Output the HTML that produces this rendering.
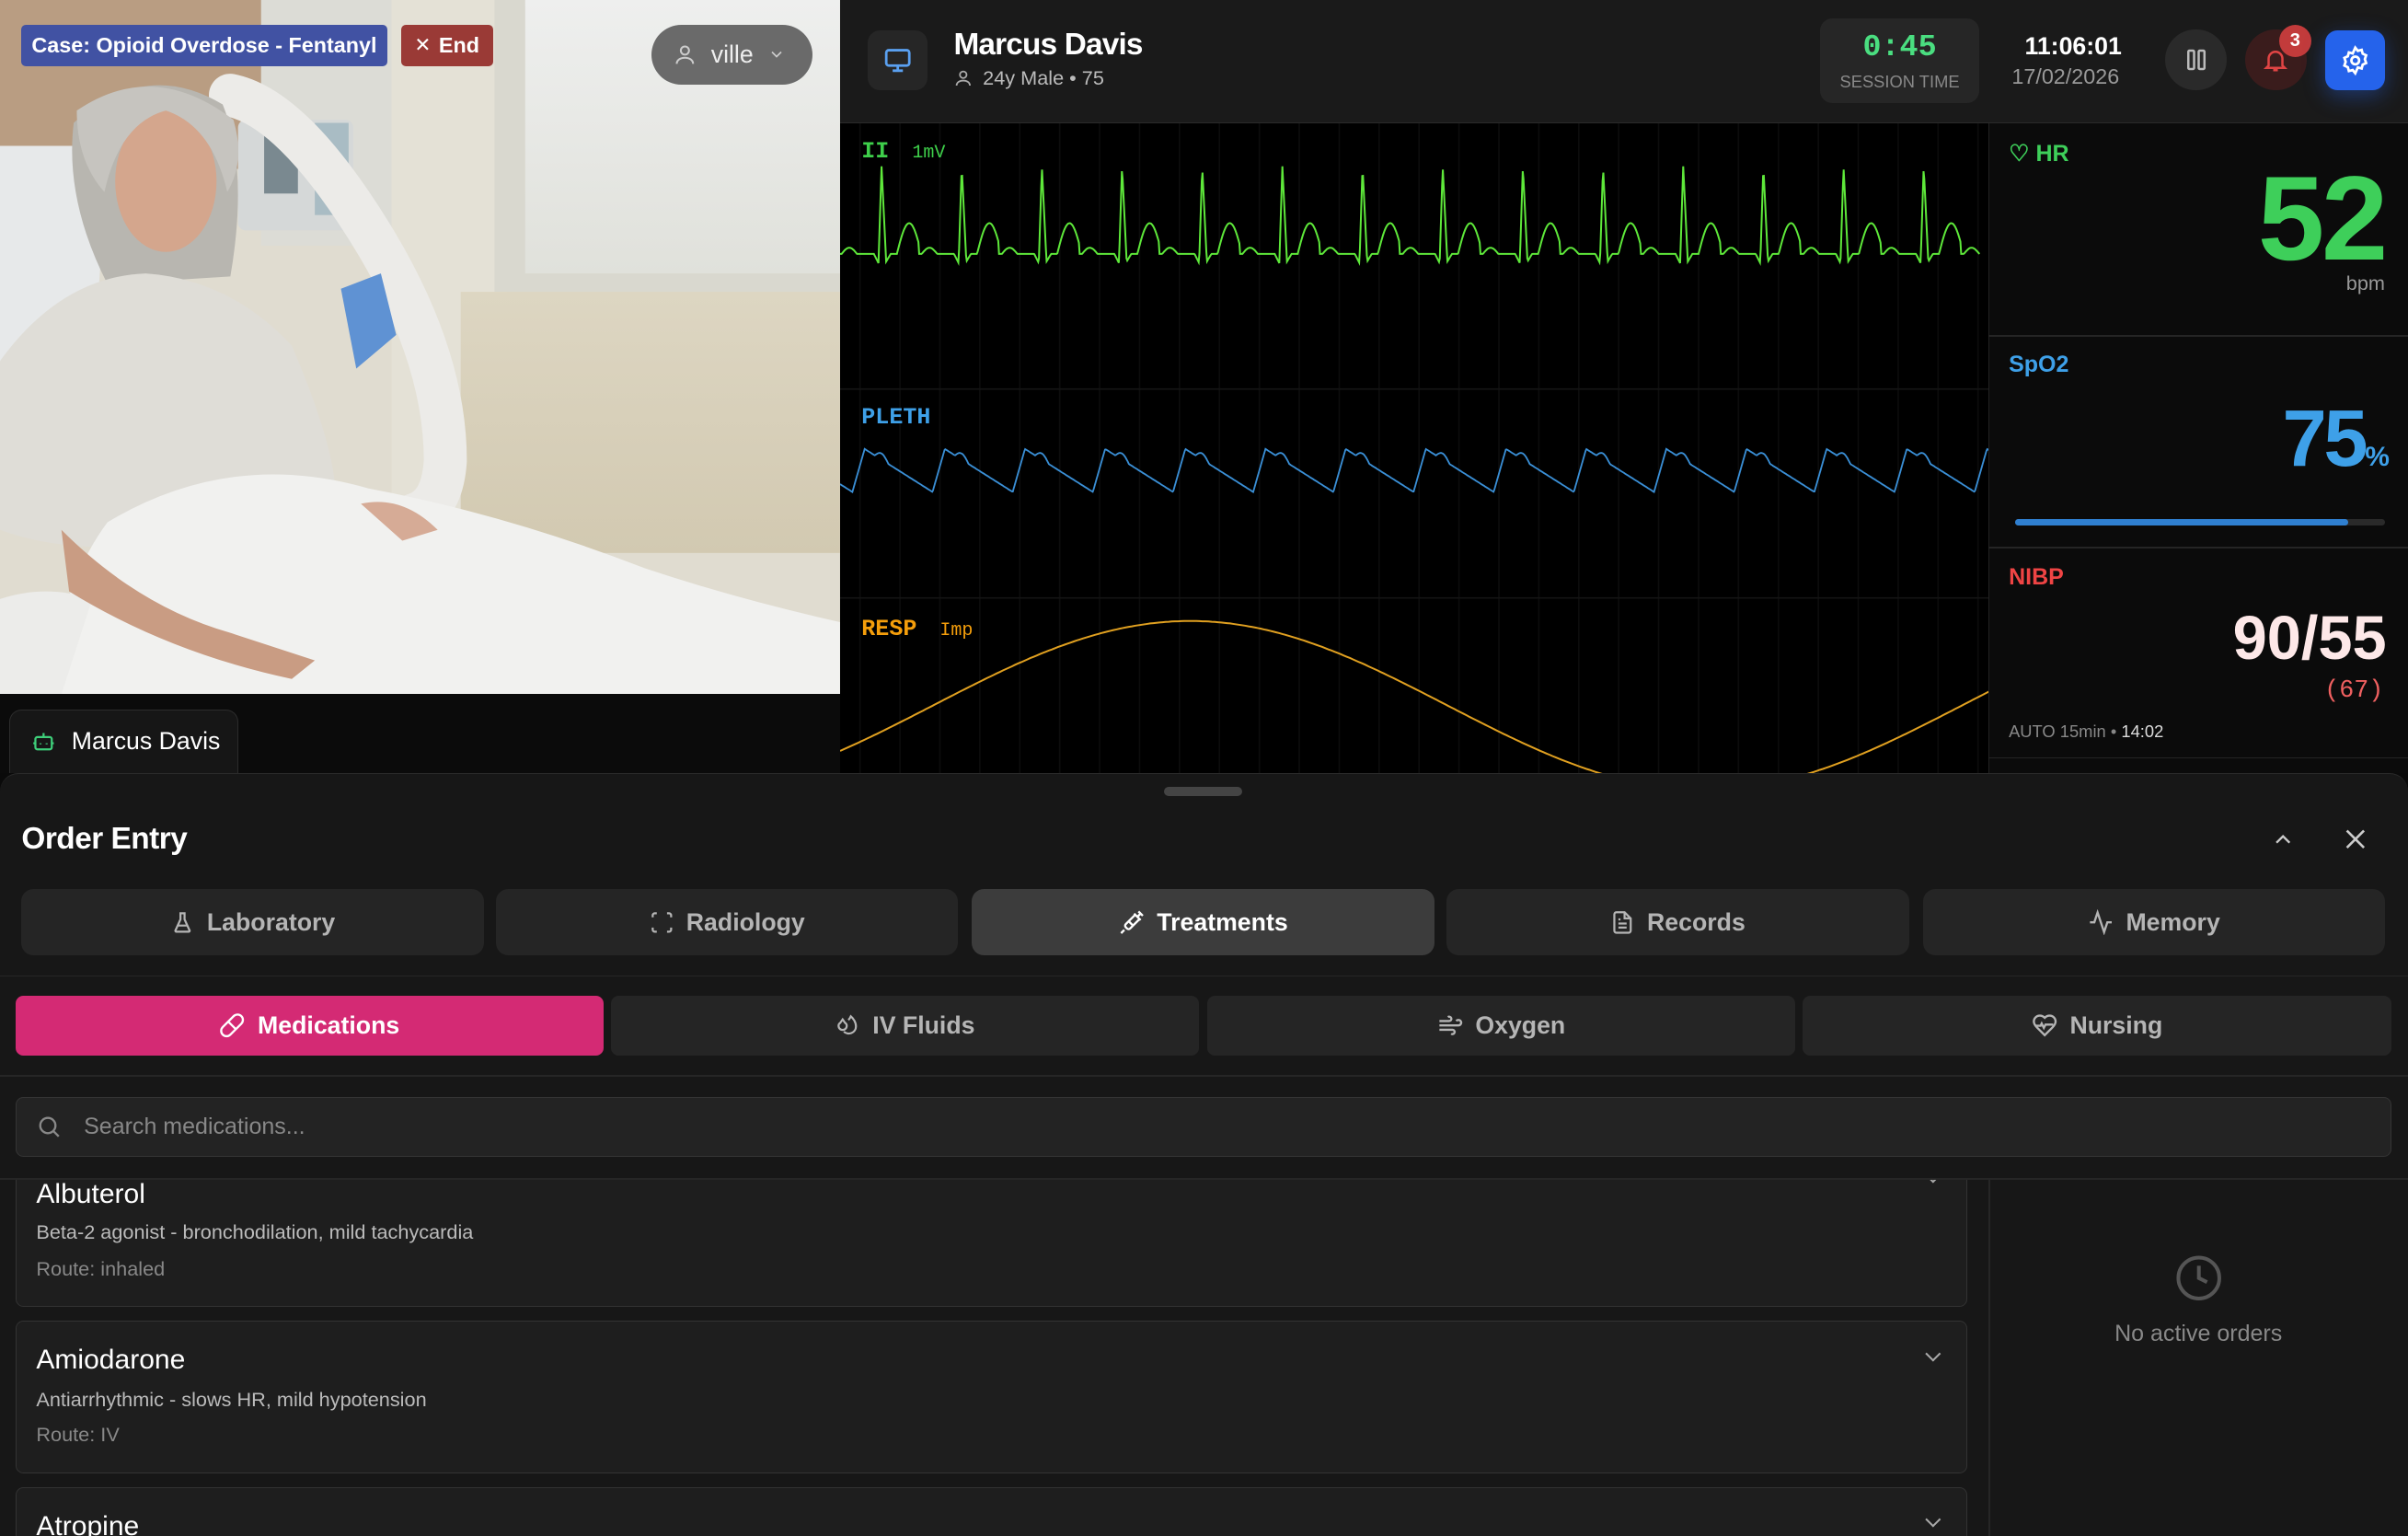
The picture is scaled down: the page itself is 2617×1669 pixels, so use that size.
<!DOCTYPE html>
<html><head><meta charset="utf-8"><style>
html{zoom:1.66901}
*{box-sizing:border-box;margin:0;padding:0}
body{width:1568px;height:999.4px;overflow:hidden;background:#0a0a0a;font-family:"Liberation Sans",sans-serif;color:#fff;position:relative}
.abs{position:absolute}
.mono{font-family:"Liberation Mono",monospace}
.btn{position:absolute;display:flex;align-items:center;justify-content:center;gap:8px;border-radius:8px;font-weight:bold;font-size:16px}
.tab{top:579px;height:43px;width:301px;background:#252525;color:#b5b5b5}
.sub{top:648px;height:39px;width:383px;background:#252525;color:#b5b5b5;border-radius:5px}
.card{position:absolute;left:10px;width:1271px;background:#1e1e1e;border:1px solid #333;border-radius:5px}
.card h3{position:absolute;left:13px;font-size:18px;font-weight:normal;color:#fff}
.card .d{position:absolute;left:13px;font-size:13px;color:#bbb}
.card .r{position:absolute;left:13px;font-size:13px;color:#888}
.chev{position:absolute;right:18px;width:7px;height:7px;border-right:1.5px solid #aaa;border-bottom:1.5px solid #aaa;transform:rotate(45deg)}
svg{display:block}
</style></head><body>

<!-- photo -->
<div class="abs" style="left:0;top:0;width:547px;height:452px;overflow:hidden;background:#cfc6b3">
<svg width="547" height="452" viewBox="0 0 547 452">
<defs>
<linearGradient id="win" x1="0" y1="0" x2="0" y2="1"><stop offset="0" stop-color="#eeefee"/><stop offset="1" stop-color="#e0e1db"/></linearGradient>
<linearGradient id="bw" x1="0" y1="0" x2="0" y2="1"><stop offset="0" stop-color="#ddd6c2"/><stop offset="1" stop-color="#d2c9b1"/></linearGradient>
</defs>
<rect width="547" height="452" fill="#e0dcd0"/>
<rect x="0" y="0" width="185" height="110" fill="#b99d82"/>
<rect x="170" y="0" width="90" height="160" fill="#dcdcd6"/>
<rect x="255" y="0" width="75" height="360" fill="#e4e1d6"/>
<rect x="322" y="0" width="225" height="190" fill="#d9d8cf"/>
<rect x="342" y="0" width="205" height="178" fill="url(#win)"/>
<rect x="300" y="190" width="247" height="170" fill="url(#bw)"/>
<rect x="155" y="78" width="75" height="72" rx="5" fill="#d5d8d8"/>
<rect x="172" y="88" width="22" height="38" fill="#7a8990"/>
<rect x="205" y="80" width="22" height="60" fill="#a9bcc4"/>
<path d="M150 62 Q190 70 240 150 Q290 230 290 300 Q288 330 270 335" fill="none" stroke="#ecebe8" stroke-width="28" stroke-linecap="round"/>
<path d="M222 188 L248 178 L258 218 L232 240 Z" fill="#5f92d3"/>
<path d="M0 95 L70 95 L60 260 L0 290 Z" fill="#e7e9ea"/>
<path d="M48 80 Q95 38 145 68 Q162 110 150 180 L70 185 Q42 130 48 80 Z" fill="#b8b6b0"/>
<ellipse cx="108" cy="118" rx="33" ry="46" fill="#d4a68d"/>
<path d="M50 72 Q100 38 152 78 Q160 105 148 125 Q138 82 108 72 Q78 80 68 125 Q50 105 50 72 Z" fill="#c6c4bf"/>
<path d="M0 235 Q40 180 95 178 Q150 182 190 225 Q222 300 218 330 L100 355 Q40 360 0 345 Z" fill="#dfddd7"/>
<path d="M70 340 Q150 292 240 318 Q330 335 420 370 Q480 390 547 405 L547 452 L30 452 Q40 380 70 340 Z" fill="#f1f1ef"/>
<path d="M0 452 L0 390 Q30 380 60 390 L40 452 Z" fill="#ececea"/>
<path d="M40 345 Q90 395 150 412 L205 430 L190 442 Q110 425 45 385 Z" fill="#c99c83"/>
<path d="M235 328 Q262 322 285 345 L262 352 Z" fill="#d6ab96"/>
</svg>
<div class="abs" style="left:14px;top:16px;width:238px;height:27px;background:#4152a3;border-radius:3px;font-size:14px;font-weight:bold;display:flex;align-items:center;justify-content:center">Case: Opioid Overdose - Fentanyl</div>
<div class="abs" style="left:261px;top:16px;width:60px;height:27px;background:#9a3a36;border-radius:3px;font-size:14px;font-weight:bold;display:flex;align-items:center;justify-content:center;gap:5px"><span style="font-weight:normal;font-size:13px">✕</span>End</div>
<div class="abs" style="left:424px;top:16px;width:105px;height:39px;background:#6a6a6a;border-radius:20px;font-size:16px;color:#eee;display:flex;align-items:center;padding-left:14px;gap:9px">
<svg width="16" height="16" viewBox="0 0 24 24" fill="none" stroke="#ccc" stroke-width="1.8"><circle cx="12" cy="8" r="4"/><path d="M4 21c0-4 4-6 8-6s8 2 8 6"/></svg>ville
<svg width="12" height="12" viewBox="0 0 24 24" fill="none" stroke="#ccc" stroke-width="2"><path d="M6 9l6 6 6-6"/></svg></div>
</div>
<div class="abs" style="left:0;top:452px;width:547px;height:51px;background:#0b0b0b"></div>
<div class="abs" style="left:6px;top:462px;width:149px;height:41px;background:#161616;border:1px solid #2c2c2c;border-bottom:none;border-radius:8px 8px 0 0;display:flex;align-items:center;padding-left:14px;gap:10px;font-size:16px">
<svg width="16" height="16" viewBox="0 0 24 24" fill="none" stroke="#3ecf7a" stroke-width="2"><rect x="4" y="8" width="16" height="12" rx="2"/><path d="M12 8V4M9 14v1M15 14v1M2 14h2M20 14h2"/></svg>Marcus Davis</div>

<!-- header -->
<div class="abs" style="left:547px;top:0;width:1021px;height:80px;background:#1a1a1a;border-bottom:1px solid #2a2a2a"></div>
<div class="abs" style="left:565px;top:20px;width:39px;height:39px;background:#262626;border-radius:8px;display:flex;align-items:center;justify-content:center">
<svg width="20" height="20" viewBox="0 0 24 24" fill="none" stroke="#5aa0f0" stroke-width="2"><rect x="3" y="4" width="18" height="12" rx="2"/><path d="M8 20h8M12 16v4"/></svg></div>
<div class="abs" style="left:621px;top:18px;font-size:20px;font-weight:bold;letter-spacing:-0.5px">Marcus Davis</div>
<div class="abs" style="left:621px;top:43px;font-size:13px;color:#bbb;display:flex;gap:6px;align-items:center"><svg width="13" height="13" viewBox="0 0 24 24" fill="none" stroke="#aaa" stroke-width="2"><circle cx="12" cy="8" r="4"/><path d="M4 21c0-4 4-6 8-6s8 2 8 6"/></svg>24y Male • 75</div>
<div class="abs" style="left:1185px;top:12px;width:104px;height:55px;background:#262626;border-radius:8px;text-align:center">
<div class="mono" style="color:#4ade80;font-weight:bold;font-size:20px;margin-top:8px">0:45</div>
<div style="font-size:11px;color:#888;margin-top:4px">SESSION TIME</div></div>
<div class="abs" style="left:1300px;top:21px;width:100px;text-align:center;font-weight:bold;font-size:16px">11:06:01</div>
<div class="abs" style="left:1300px;top:42px;width:90px;text-align:center;font-size:14px;color:#999">17/02/2026</div>
<div class="abs" style="left:1410px;top:19px;width:40px;height:40px;border-radius:20px;background:#2a2a2a;display:flex;align-items:center;justify-content:center">
<svg width="18" height="18" viewBox="0 0 24 24" fill="none" stroke="#bbb" stroke-width="2"><rect x="5" y="4" width="5" height="16" rx="1"/><rect x="14" y="4" width="5" height="16" rx="1"/></svg></div>
<div class="abs" style="left:1462px;top:19px;width:40px;height:40px;border-radius:20px;background:#3a1c1c;display:flex;align-items:center;justify-content:center">
<svg width="18" height="18" viewBox="0 0 24 24" fill="none" stroke="#e04444" stroke-width="2"><path d="M6 17V11a6 6 0 0112 0v6l2 2H4zM10 21h4"/></svg></div>
<div class="abs" style="left:1484px;top:16px;width:21px;height:21px;border-radius:11px;background:#c23b3b;font-size:12px;font-weight:bold;display:flex;align-items:center;justify-content:center">3</div>
<div class="abs" style="left:1514px;top:20px;width:39px;height:39px;border-radius:8px;background:#2563eb;display:flex;align-items:center;justify-content:center;box-shadow:0 4px 14px rgba(37,99,235,.4)">
<svg width="20" height="20" viewBox="0 0 24 24" fill="none" stroke="#fff" stroke-width="2"><circle cx="12" cy="12" r="3"/><path d="M12 2l2 2.5 3-.8.8 3L20.5 8 19.5 11l1 3-2.7 1.3-.8 3-3-.8L12 22l-2-2.5-3 .8-.8-3L3.5 16l1-3-1-3L6.2 8.7l.8-3 3 .8z"/></svg></div>

<!-- monitor -->
<div class="abs" style="left:547px;top:80px;width:748px;height:423px;background:#000;overflow:hidden">
<svg width="748" height="423" id="mon"></svg>
<div class="abs mono" style="left:14px;top:10px;color:#3ecf4a;font-weight:bold;font-size:15px">II <span style="font-weight:normal;font-size:12px;margin-left:6px">1mV</span></div>
<div class="abs mono" style="left:14px;top:183px;color:#3ea0e8;font-weight:bold;font-size:15px">PLETH</div>
<div class="abs mono" style="left:14px;top:321px;color:#f59e0b;font-weight:bold;font-size:15px">RESP <span style="font-weight:normal;font-size:12px;margin-left:6px">Imp</span></div>
</div>

<!-- vitals -->
<div class="abs" style="left:1295px;top:80px;width:273px;height:423px;background:#0b0b0b;border-left:1px solid #222"></div>
<div class="abs" style="left:1295px;top:218px;width:273px;height:1px;background:#252525"></div>
<div class="abs" style="left:1295px;top:356px;width:273px;height:1px;background:#252525"></div>
<div class="abs" style="left:1295px;top:493px;width:273px;height:1px;background:#252525"></div>
<div class="abs" style="left:1308px;top:91px;color:#3ecf5a;font-weight:bold;font-size:15px">♡ HR</div>
<div class="abs" style="right:15px;top:98px;color:#3ecf5a;font-weight:bold;font-size:78px;line-height:88px;letter-spacing:-2px">52</div>
<div class="abs" style="right:15px;top:177px;color:#999;font-size:13px">bpm</div>
<div class="abs" style="left:1308px;top:229px;color:#3ea0e8;font-weight:bold;font-size:15px">SpO2</div>
<div class="abs" style="right:12px;top:256px;color:#3ea0e8;font-weight:bold;font-size:52px;line-height:60px;letter-spacing:-2px">75<span style="font-size:18px;letter-spacing:0">%</span></div>
<div class="abs" style="left:1312px;top:338px;width:241px;height:4px;background:#2a2a2a;border-radius:2px"><div style="width:217px;height:4px;background:#2f7fd0;border-radius:2px"></div></div>
<div class="abs" style="left:1308px;top:367px;color:#ef4444;font-weight:bold;font-size:15px">NIBP</div>
<div class="abs" style="right:14px;top:393px;color:#fde8e8;font-weight:bold;font-size:40px;line-height:46px;letter-spacing:0px">90/55</div>
<div class="abs mono" style="right:16px;top:441px;color:#ef6060;font-size:16px">(67)</div>
<div class="abs" style="left:1308px;top:470px;color:#888;font-size:11px">AUTO 15min • <span style="color:#ddd">14:02</span></div>

<!-- bottom sheet -->
<div class="abs" style="left:0;top:503px;width:1568px;height:497px;background:#171717;border-radius:12px 12px 0 0;border-top:1px solid #2a2a2a"></div>
<div class="abs" style="left:758px;top:512px;width:51px;height:6px;border-radius:3px;background:#444"></div>
<div class="abs" style="left:14px;top:535px;font-size:20px;font-weight:bold;letter-spacing:-0.3px">Order Entry</div>
<svg class="abs" style="left:1478px;top:538px" width="17" height="17" viewBox="0 0 24 24" fill="none" stroke="#ccc" stroke-width="2"><path d="M6 15l6-6 6 6"/></svg>
<svg class="abs" style="left:1524px;top:537px" width="19" height="19" viewBox="0 0 24 24" fill="none" stroke="#ccc" stroke-width="2"><path d="M5 5l14 14M19 5L5 19"/></svg>

<div class="btn tab" style="left:14px"><svg width="16" height="16" viewBox="0 0 24 24" fill="none" stroke="#b5b5b5" stroke-width="2"><path d="M9 3h6M10 3v6l-5 11a1 1 0 001 1h12a1 1 0 001-1L14 9V3M7 15h10"/></svg>Laboratory</div>
<div class="btn tab" style="left:323px"><svg width="16" height="16" viewBox="0 0 24 24" fill="none" stroke="#b5b5b5" stroke-width="2"><path d="M3 7V5a2 2 0 012-2h2M17 3h2a2 2 0 012 2v2M21 17v2a2 2 0 01-2 2h-2M7 21H5a2 2 0 01-2-2v-2"/></svg>Radiology</div>
<div class="btn tab" style="left:633px;background:#3c3c3c;color:#fff"><svg width="17" height="17" viewBox="0 0 24 24" fill="none" stroke="#fff" stroke-width="2"><path d="M18 2l4 4M17 7l3-3M19 9l-8.7 8.7a2 2 0 01-2.8 0L6.3 16.5a2 2 0 010-2.8L15 5M9 11l4 4M5 19l-3 3M14 4l6 6"/></svg>Treatments</div>
<div class="btn tab" style="left:942px"><svg width="16" height="16" viewBox="0 0 24 24" fill="none" stroke="#b5b5b5" stroke-width="2"><path d="M14 2H6a2 2 0 00-2 2v16a2 2 0 002 2h12a2 2 0 002-2V8zM14 2v6h6M16 13H8M16 17H8M10 9H8"/></svg>Records</div>
<div class="btn tab" style="left:1252px"><svg width="17" height="17" viewBox="0 0 24 24" fill="none" stroke="#b5b5b5" stroke-width="2"><path d="M22 12h-4l-3 9L9 3l-3 9H2"/></svg>Memory</div>
<div class="abs" style="left:0;top:635px;width:1568px;height:1px;background:#262626"></div>

<div class="btn sub" style="left:10px;background:#d42a74;color:#fff"><svg width="17" height="17" viewBox="0 0 24 24" fill="none" stroke="#fff" stroke-width="2"><path d="M10.5 20.5l10-10a4.95 4.95 0 10-7-7l-10 10a4.95 4.95 0 107 7zM8.5 8.5l7 7"/></svg>Medications</div>
<div class="btn sub" style="left:398px"><svg width="16" height="16" viewBox="0 0 24 24" fill="none" stroke="#b5b5b5" stroke-width="2"><path d="M7 16.3c2.2 0 4-1.8 4-4 0-1.2-.6-2.3-1.7-3L7 6 4.7 9.3C3.6 10 3 11.1 3 12.3c0 2.2 1.8 4 4 4zM12.6 6.6A11 11 0 0015 3c2.5 2 5 5.9 5 9.8a7 7 0 01-11.8 5.1"/></svg>IV Fluids</div>
<div class="btn sub" style="left:786px"><svg width="17" height="17" viewBox="0 0 24 24" fill="none" stroke="#b5b5b5" stroke-width="2"><path d="M12.8 19.6A2 2 0 1014 16H2M17.5 8a2.5 2.5 0 112 4H2M9.8 4.4A2 2 0 1111 8H2"/></svg>Oxygen</div>
<div class="btn sub" style="left:1174px"><svg width="17" height="17" viewBox="0 0 24 24" fill="none" stroke="#b5b5b5" stroke-width="2"><path d="M19 14c1.5-1.5 3-3.2 3-5.5A5.5 5.5 0 0016.5 3c-1.8 0-3 .5-4.5 2-1.5-1.5-2.7-2-4.5-2A5.5 5.5 0 002 8.5c0 2.3 1.5 4 3 5.5l7 7z"/><path d="M3.2 12.3h5l1-2 2 4 1.5-3h7.1"/></svg>Nursing</div>
<div class="abs" style="left:0;top:700px;width:1568px;height:1px;background:#262626"></div>

<div class="abs" style="left:10px;top:714px;width:1547px;height:39px;background:#232323;border:1px solid #353535;border-radius:5px;display:flex;align-items:center;padding-left:13px;gap:14px;color:#888;font-size:15px">
<svg width="17" height="17" viewBox="0 0 24 24" fill="none" stroke="#888" stroke-width="2"><circle cx="11" cy="11" r="7"/><path d="M21 21l-5-5"/></svg>Search medications...</div>
<div class="abs" style="left:0;top:767px;width:1568px;height:1px;background:#262626"></div>

<div class="abs" style="left:0;top:768px;width:1295px;height:232px;overflow:hidden">
<div class="card" style="top:-10px;height:93px"><h3 style="top:9px">Albuterol</h3><div class="chev" style="top:3px"></div><div class="d" style="top:36px">Beta-2 agonist - bronchodilation, mild tachycardia</div><div class="r" style="top:60px">Route: inhaled</div></div>
<div class="card" style="top:92px;height:99px"><h3 style="top:15px">Amiodarone</h3><div class="chev" style="top:17px"></div><div class="d" style="top:43px">Antiarrhythmic - slows HR, mild hypotension</div><div class="r" style="top:66px">Route: IV</div></div>
<div class="card" style="top:200px;height:60px"><h3 style="top:15px">Atropine</h3><div class="chev" style="top:17px"></div></div>
</div>
<div class="abs" style="left:1295px;top:768px;width:1px;height:232px;background:#262626"></div>
<svg class="abs" style="left:1416px;top:816px" width="32" height="32" viewBox="0 0 24 24" fill="none" stroke="#555" stroke-width="1.8"><circle cx="12" cy="12" r="10"/><path d="M12 6v6l4 2"/></svg>
<div class="abs" style="left:1295px;top:860px;width:273px;text-align:center;color:#888;font-size:15px">No active orders</div>

<script>
var s='',W=748;
for(var x=13;x<W;x+=26)s+='<line x1="'+x+'" y1="0" x2="'+x+'" y2="423" stroke="#0c0c0c" stroke-width="1"/>';
s+='<line x1="0" y1="173" x2="748" y2="173" stroke="#141414"/><line x1="0" y1="309" x2="748" y2="309" stroke="#141414"/>';
var e='',P=52.2;
function ecg(t){
  var b=85;
  if(t<-14&&t>-24)return b-4*Math.sin((t+24)/10*Math.PI);
  if(t>=-3&&t<0)return b+ (t+3)*2;
  if(t>=0&&t<2)return b+6-(t/2)*(b+6-28);
  if(t>=2&&t<5)return 28+(t-2)/3*(90-28);
  if(t>=5&&t<8)return 90-(t-5)/3*5;
  if(t>=12&&t<28)return b-20*Math.sin((t-12)/16*Math.PI);
  return b;
}
for(var x=0;x<=742;x+=0.5){var t=((x-25)%P+P)%P;if(t>P-26)t-=P;e+=(x?'L':'M')+x+' '+ecg(t).toFixed(1);}
s+='<path d="'+e+'" fill="none" stroke="#5ee83a" stroke-width="1.2"/>';
var p='';
for(var x=0;x<=748;x+=0.5){var t=((x-8)%P+P)%P,y;
 if(t<8)y=240-t/8*28;else{var u=(t-8)/(P-8);y=212+28*u+ (u>0.15&&u<0.35?-4*Math.sin((u-0.15)/0.2*Math.PI):0);}
 p+=(x?'L':'M')+x+' '+y.toFixed(1);}
s+='<path d="'+p+'" fill="none" stroke="#3a8fd6" stroke-width="1.1"/>';
var r='';
for(var x=0;x<=748;x+=2){var X=x+547;var y=459-55*Math.cos(Math.PI*(X-775)/335)-80;r+=(x?'L':'M')+x+' '+y.toFixed(1);}
s+='<path d="'+r+'" fill="none" stroke="#e0a020" stroke-width="1.2"/>';
document.getElementById('mon').innerHTML=s;
</script>
</body></html>
